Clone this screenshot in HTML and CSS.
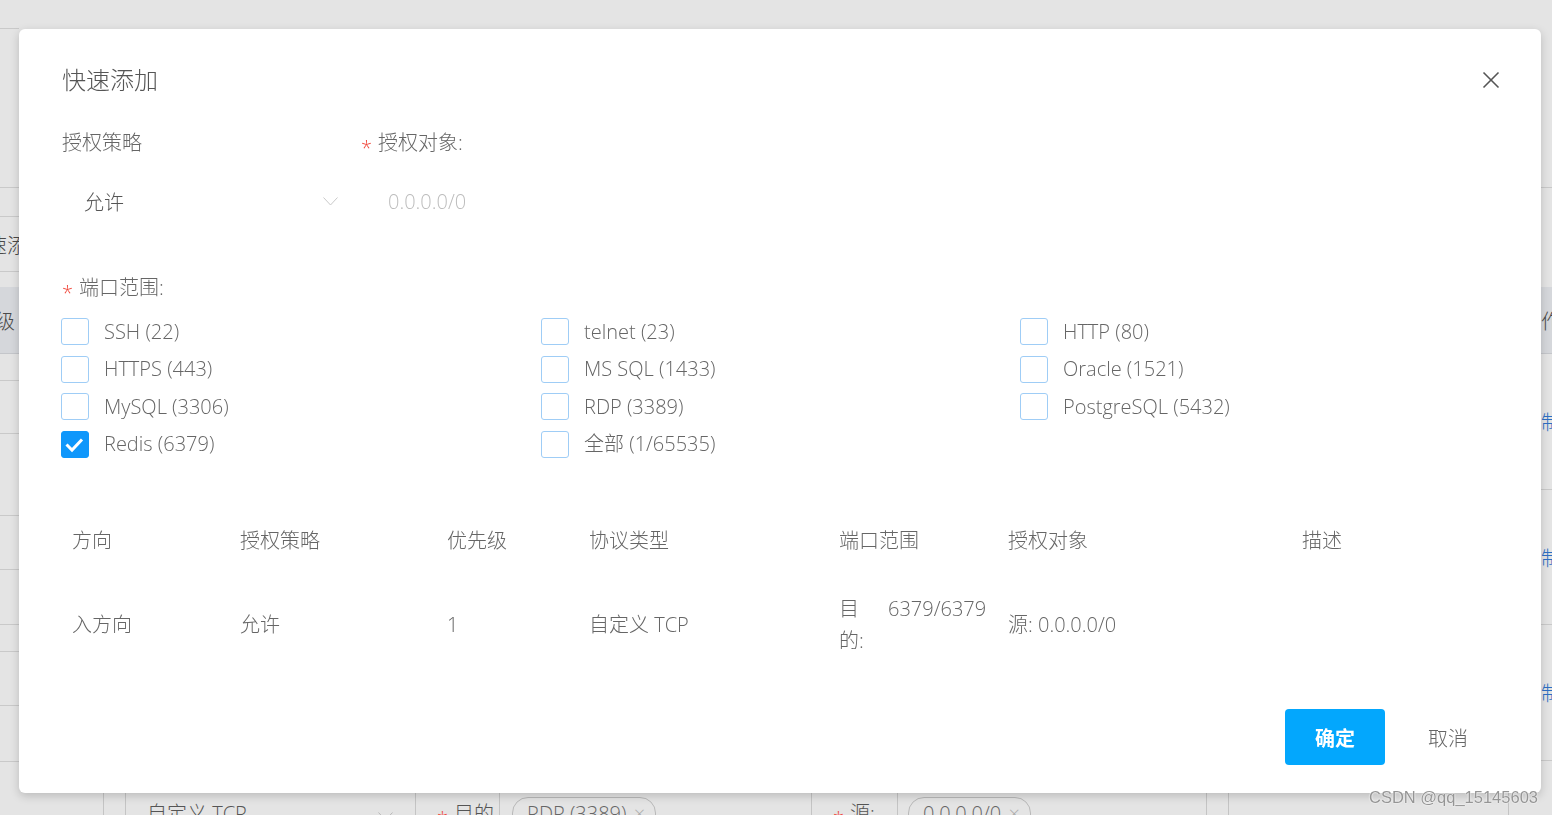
FILE: index.html
```html
<!DOCTYPE html>
<html lang="zh-CN">
<head>
    <meta charset="UTF-8">
    <meta name="viewport" content="width=device-width, initial-scale=1.0">
    <title>快速添加</title>
    <link rel="stylesheet" href="styles.css">
</head>
<body>
    <!-- page behind the dialog -->
    <div class="page">
        <div class="page-body">
            <div class="side side-left">
                <div class="cell"></div>
                <div class="cell"></div>
                <div class="cell"></div>
                <div class="cell"><span class="cut-left">速添</span></div>
                <div class="cell no-line"></div>
                <div class="cell head"><span class="cut-left-sm">级</span></div>
                <div class="cell"></div>
                <div class="cell"></div>
                <div class="cell"></div>
                <div class="cell"></div>
                <div class="cell"></div>
                <div class="cell"></div>
                <div class="cell"></div>
                <div class="cell"></div>
            </div>
            <div class="page-main"></div>
            <div class="side side-right">
                <div class="cell"></div>
                <div class="cell no-line"></div>
                <div class="cell head"><span>作</span></div>
                <div class="cell"><span class="link">制</span></div>
                <div class="cell"><span class="link">制</span></div>
                <div class="cell"><span class="link">制</span></div>
            </div>
        </div>
        <div class="page-form">
            <div class="pf-cell pf-first"></div>
            <div class="pf-cell pf-gap"></div>
            <div class="pf-cell pf-select">自定义 TCP
                <svg class="chev" width="15" height="9" viewBox="0 0 15 9"><polyline points="0.5,0.5 7.5,8 14.5,0.5" fill="none" stroke="#b8b8b8"/></svg>
            </div>
            <div class="pf-cell pf-label"><span class="star">*</span>目的</div>
            <div class="pf-cell pf-tags"><span class="tag">RDP (3389) <i>×</i></span></div>
            <div class="pf-cell pf-label pf-label2"><span class="star">*</span>源:</div>
            <div class="pf-cell pf-tags pf-tags2"><span class="tag">0.0.0.0/0 <i>×</i></span></div>
            <div class="pf-cell pf-gap"></div>
            <div class="pf-cell pf-last"></div>
        </div>
    </div>

    <div class="mask">
        <div class="dialog">
            <div class="dialog-header">
                <span class="dialog-title">快速添加</span>
                <svg class="close" width="18" height="18" viewBox="0 0 18 18">
                    <line x1="1.5" y1="1.5" x2="16.5" y2="16.5" stroke="#555" stroke-width="1.6"/>
                    <line x1="16.5" y1="1.5" x2="1.5" y2="16.5" stroke="#555" stroke-width="1.6"/>
                </svg>
            </div>

            <div class="form-grid">
                <div class="label">授权策略</div>
                <div class="label"><span class="star">*</span>授权对象:</div>
                <div class="select">
                    <span>允许</span>
                    <svg width="15" height="9" viewBox="0 0 15 9"><polyline points="0.5,0.5 7.5,8 14.5,0.5" fill="none" stroke="#c9c9c9"/></svg>
                </div>
                <div class="input">0.0.0.0/0</div>
            </div>

            <div class="label port-title"><span class="star">*</span>端口范围:</div>

            <div class="checks">
                <label class="check"><span class="box"></span>SSH (22)</label>
                <label class="check"><span class="box"></span>telnet (23)</label>
                <label class="check"><span class="box"></span>HTTP (80)</label>
                <label class="check"><span class="box"></span>HTTPS (443)</label>
                <label class="check"><span class="box"></span>MS SQL (1433)</label>
                <label class="check"><span class="box"></span>Oracle (1521)</label>
                <label class="check"><span class="box"></span>MySQL (3306)</label>
                <label class="check"><span class="box"></span>RDP (3389)</label>
                <label class="check"><span class="box"></span>PostgreSQL (5432)</label>
                <label class="check"><span class="box checked"><svg width="27" height="27" viewBox="0 0 27 27"><polyline points="5.5,13.5 11,19 21,8.5" fill="none" stroke="#fff" stroke-width="3"/></svg></span>Redis (6379)</label>
                <label class="check"><span class="box"></span>全部 (1/65535)</label>
            </div>

            <table class="rules">
                <colgroup>
                    <col class="c1"><col class="c2"><col class="c3"><col class="c4"><col class="c5"><col class="c6"><col class="c7">
                </colgroup>
                <thead>
                    <tr>
                        <th>方向</th>
                        <th>授权策略</th>
                        <th>优先级</th>
                        <th>协议类型</th>
                        <th>端口范围</th>
                        <th>授权对象</th>
                        <th>描述</th>
                    </tr>
                </thead>
                <tbody>
                    <tr>
                        <td>入方向</td>
                        <td>允许</td>
                        <td>1</td>
                        <td>自定义 TCP</td>
                        <td><div class="port"><span class="port-label">目的:</span><span>6379/6379</span></div></td>
                        <td>源: 0.0.0.0/0</td>
                        <td></td>
                    </tr>
                </tbody>
            </table>

            <div class="dialog-footer">
                <button class="btn btn-primary">确定</button>
                <button class="btn btn-text">取消</button>
            </div>
        </div>
    </div>

    <div class="watermark">CSDN @qq_15145603</div>
</body>
</html>
```

FILE: styles.css
```css
        * {
            margin: 0;
            padding: 0;
            box-sizing: border-box;
        }

        body {
            font-family: "Open Sans", "Noto Sans CJK SC", sans-serif;
            font-weight: 300;
            background: #e4e4e4;
            color: #666;
            width: 1552px;
            height: 815px;
            overflow: hidden;
        }

        /* background page (dimmed) */
        .page {
            display: flex;
            flex-direction: column;
            height: 815px;
        }

        .page-body {
            display: flex;
            height: 793px;
            flex-shrink: 0;
        }

        .page-main {
            flex: 1;
        }

        .side {
            display: grid;
            overflow: hidden;
            font-size: 20px;
            color: #4a4a4a;
        }

        .side-left {
            width: 19px;
            grid-template-rows: 29px 159px 29px 55px 15px 67px 27px 53px 82px 54px 55px 27px 54px 56px;
        }

        .side-right {
            width: 11px;
            grid-template-rows: 188px 99px 67px 136px 135px 136px;
        }

        .cell {
            border-bottom: 1px solid #c9c9c9;
            display: flex;
            align-items: center;
            white-space: nowrap;
        }

        .cell.no-line {
            border-bottom: none;
        }

        .cell.head {
            background: #d5d7db;
            border-bottom: 1px solid #c4c6ca;
        }

        .cut-left {
            margin-left: -13px;
        }

        .cut-left-sm {
            margin-left: -5px;
        }

        .link {
            color: #2d6fc4;
        }

        .page-form {
            display: flex;
            height: 40px;
            flex-shrink: 0;
            font-size: 20px;
            color: #555;
            white-space: nowrap;
        }

        .pf-cell {
            border-right: 1px solid #c4c4c4;
            padding-top: 4px;
            line-height: 32px;
        }

        .pf-first { width: 104px; }
        .pf-gap { width: 22px; }
        .pf-select {
            width: 290px;
            padding-left: 21px;
            display: flex;
            justify-content: space-between;
            padding-right: 22px;
            padding-top: 5px;
        }
        .pf-select .chev { margin-top: 14px; }
        .pf-label { width: 84px; padding-left: 21px; padding-top: 5px; }
        .pf-label2 { width: 86px; }
        .pf-tags { width: 312px; padding-left: 12px; }
        .pf-tags2 { width: 309px; padding-left: 10px; }
        .pf-last { width: 280px; }

        .tag {
            display: inline-block;
            border: 1px solid #b9b9b9;
            border-radius: 16px;
            padding: 0 10px 0 14px;
            color: #666;
        }

        .tag i {
            font-style: normal;
            color: #aaa;
            margin-left: 2px;
        }

        .watermark {
            position: absolute;
            right: 14px;
            bottom: 8px;
            font-family: "Liberation Sans", sans-serif;
            font-size: 16.5px;
            font-weight: 400;
            color: #959595;
            text-shadow: 0 0 1px #fff, 0 0 2px #fff;
        }

        /* dialog */
        .mask {
            position: fixed;
            top: 0;
            left: 0;
            right: 0;
            bottom: 0;
            padding: 29px 0 0 19px;
        }

        .dialog {
            width: 1522px;
            height: 764px;
            background: #fff;
            border-radius: 6px;
            box-shadow: 0 3px 10px rgba(0, 0, 0, 0.18);
            padding: 35px 43px 28px 43px;
            font-size: 20px;
        }

        .dialog-header {
            display: flex;
            justify-content: space-between;
            align-items: center;
            height: 32px;
        }

        .dialog-title {
            font-size: 24px;
            line-height: 32px;
            color: #555;
        }

        .close {
            margin-right: -2px;
        }

        .form-grid {
            display: grid;
            grid-template-columns: 299px 1fr;
            grid-template-rows: 28px 40px;
            row-gap: 24px;
            margin-top: 33px;
        }

        .label {
            height: 28px;
            line-height: 28px;
            color: #666;
        }

        .star {
            color: #f04a3e;
            margin-right: 6px;
            line-height: 0;
            vertical-align: -5px;
        }

        .select {
            width: 288px;
            display: flex;
            align-items: center;
            justify-content: space-between;
            padding: 0 12px 0 22px;
            color: #555;
        }

        .input {
            display: flex;
            align-items: center;
            padding-left: 27px;
            color: #bdbdbd;
        }

        .port-title {
            margin-top: 53px;
        }

        .checks {
            display: grid;
            grid-template-columns: 480px 479px 1fr;
            grid-auto-rows: 27px;
            row-gap: 10.5px;
            margin-top: 16px;
            margin-left: -1px;
        }

        .check {
            display: flex;
            align-items: center;
            gap: 15px;
            line-height: 28px;
            color: #666;
        }

        .box {
            width: 28px;
            height: 27px;
            border: 1px solid #9fcdf6;
            border-radius: 3px;
            background: #fff;
        }

        .box.checked {
            background: #0f97fb;
            border-color: #0f97fb;
        }

        .box svg {
            display: block;
            margin: -1px;
        }

        .rules {
            width: 1436px;
            table-layout: fixed;
            border-collapse: collapse;
            margin-top: 49.5px;
        }

        .rules .c1 { width: 168px; }
        .rules .c2 { width: 207px; }
        .rules .c3 { width: 142px; }
        .rules .c4 { width: 250px; }
        .rules .c5 { width: 169px; }
        .rules .c6 { width: 294px; }
        .rules .c7 { width: 206px; }

        .rules th,
        .rules td {
            text-align: left;
            font-weight: 300;
            padding: 18px 10px;
            line-height: 32px;
            vertical-align: middle;
            color: #666;
        }

        .port {
            display: flex;
            align-items: flex-start;
            gap: 9px;
        }

        .port-label {
            width: 40px;
            flex-shrink: 0;
        }

        .dialog-footer {
            display: flex;
            justify-content: flex-end;
            gap: 13px;
            margin-top: 34px;
        }

        .btn {
            width: 100px;
            height: 56px;
            border: none;
            border-radius: 4px;
            font-family: "Open Sans", "Noto Sans CJK SC", sans-serif;
            font-size: 20px;
            cursor: pointer;
        }

        .btn-primary {
            background: #03a7fd;
            color: #fff;
            font-weight: 700;
        }

        .btn-text {
            background: transparent;
            color: #666;
            font-weight: 300;
        }
```
